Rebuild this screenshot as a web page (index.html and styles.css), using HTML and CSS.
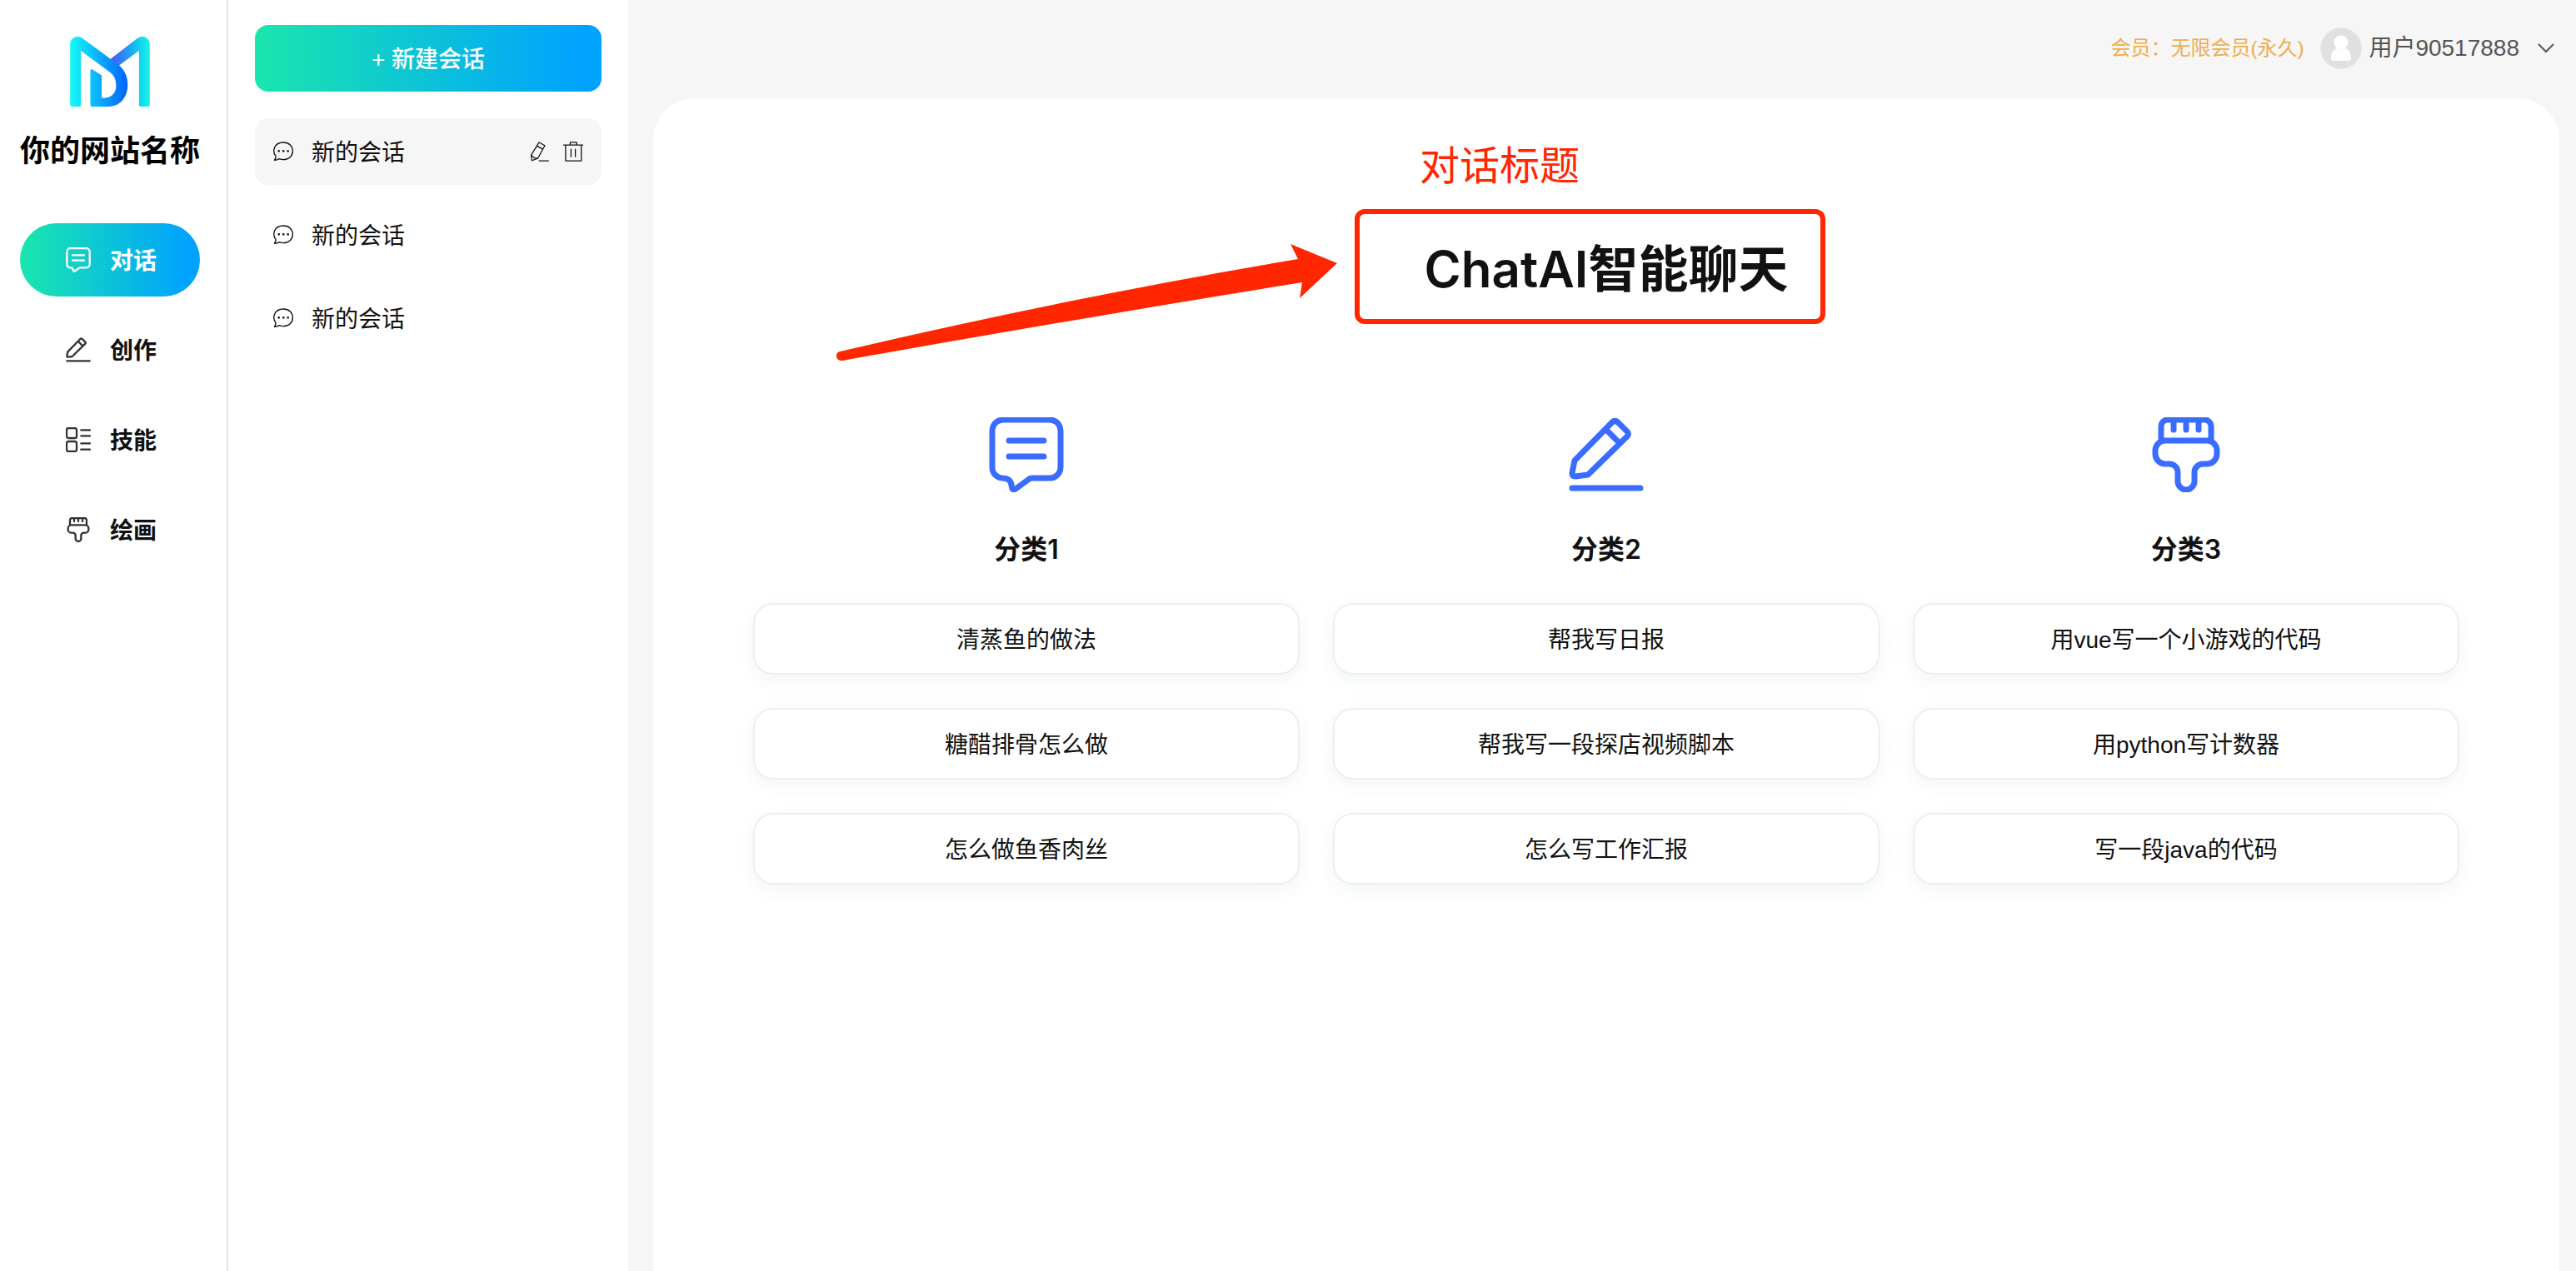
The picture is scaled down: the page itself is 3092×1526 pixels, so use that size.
FILE: index.html
```html
<!DOCTYPE html>
<html lang="zh-CN">
<head>
<meta charset="utf-8">
<meta name="viewport" content="width=device-width, initial-scale=1">
<title>ChatAI智能聊天</title>
<link rel="stylesheet" href="styles.css">
</head>
<body>
<svg class="sprite" aria-hidden="true">
  <symbol id="i-chat" viewBox="0 0 90 90"><path d="M17 3H73a13 13 0 0 1 13 13V60a13 13 0 0 1-13 13H52Q49 73 47 75L32 86Q28 88 27.500 84C27 76 23 73 16 73A12.500 12.500 0 0 1 4 60V16A13 13 0 0 1 17 3ZM24 28H66M24 47H66"/></symbol>
  <symbol id="i-pen" viewBox="0 0 90 90"><path d="M7 52L52 6Q55.500 3 59 6L70 17Q73 20 70 23L23 69L8 71Q4 71 4 67ZM46 16L60 30M4 85H86"/></symbol>
  <symbol id="i-grid" viewBox="0 0 90 90"><rect x="3" y="3" width="36" height="36" rx="7"/><rect x="3" y="51" width="36" height="36" rx="7"/><path d="M55 10H87M55 31H87M55 58H87M55 80H87"/></symbol>
  <symbol id="i-brush" viewBox="0 0 90 90"><path d="M15 28V11A8 8 0 0 1 23 3H67A8 8 0 0 1 75 11V28M30 4V15M45 4V15M60 4V15M20 28H70A12 12 0 0 1 82 40V44A12 12 0 0 1 70 56H65A10 10 0 0 0 55 66V77A10 10 0 0 1 35 77V66A10 10 0 0 0 25 56H20A12 12 0 0 1 8 44V40A12 12 0 0 1 20 28Z"/></symbol>
  <symbol id="i-bubble" viewBox="0 0 72 72"><path d="M9 52C-5 34 3 3 37 3C57 3 70 17 70 34C70 52 56 65 37 65C31 65 26 64 22 62C16 66 10 67 4 67C8 62 10 58 9 52Z"/><path class="dots" d="M20 34H20.100M36.500 34H36.600M53 34H53.100"/></symbol>
  <symbol id="i-edit" viewBox="0 0 72 76"><path d="M33 3L55 15L28 64L6 72L3 51ZM26 17L47 29M3 51L15 62L28 64M33 73H69"/></symbol>
  <symbol id="i-trash" viewBox="0 0 72 74"><path d="M0 13H72M25 13V3H49V13M8 13V71H66V13M28 28V56M44 28V56"/></symbol>
</svg>
<div class="app">
  <aside class="sidebar">
    <svg class="logo" viewBox="252 131 288 253" aria-hidden="true">
      <defs>
        <linearGradient id="g-left" gradientUnits="userSpaceOnUse" x1="252" y1="0" x2="460" y2="0"><stop offset="0" stop-color="#16fbf8"/><stop offset="1" stop-color="#0062ff"/></linearGradient>
        <linearGradient id="g-right" gradientUnits="userSpaceOnUse" x1="397" y1="0" x2="540" y2="0"><stop offset="0" stop-color="#4f51fb"/><stop offset=".5" stop-color="#1fa5f3"/><stop offset=".75" stop-color="#12d4ee"/><stop offset="1" stop-color="#17f4e6"/></linearGradient>
      </defs>
      <path fill="url(#g-right)" d="M397 212L494 138Q512 125 529 136Q540 144 540 160V378Q540 384 534 384H507Q501 384 501 378V182L428 236Z"/>
      <path fill="url(#g-left)" d="M252 378V158C252 142 264 131 279 131Q289 131 298 138L412 222C445 242 460 270 460 305C460 350 433 384 390 384H331Q325 384 325 378V254Q325 247 332 249L366 271V352H378C402 351 418 334 418 310C418 285 411 271 395 259L291 182V378Q291 384 285 384H258Q252 384 252 378Z"/>
    </svg>
    <p class="site-name">你的网站名称</p>
    <nav class="menu">
      <a class="menu-item active" href="#chat" aria-current="page"><svg><use href="#i-chat"/></svg><span class="label">对话</span></a>
      <a class="menu-item" href="#create"><svg><use href="#i-pen"/></svg><span class="label">创作</span></a>
      <a class="menu-item" href="#skills"><svg><use href="#i-grid"/></svg><span class="label">技能</span></a>
      <a class="menu-item" href="#draw"><svg><use href="#i-brush"/></svg><span class="label">绘画</span></a>
    </nav>
  </aside>

  <section class="sessions">
    <button class="new-session" type="button">+ 新建会话</button>
    <ul class="session-list">
      <li class="session active">
        <a href="#session-1"><svg><use href="#i-bubble"/></svg><span class="label">新的会话</span></a>
        <button type="button" aria-label="编辑"><svg><use href="#i-edit"/></svg></button>
        <button type="button" aria-label="删除"><svg><use href="#i-trash"/></svg></button>
      </li>
      <li class="session"><a href="#session-2"><svg><use href="#i-bubble"/></svg><span class="label">新的会话</span></a></li>
      <li class="session"><a href="#session-3"><svg><use href="#i-bubble"/></svg><span class="label">新的会话</span></a></li>
    </ul>
  </section>

  <div class="main">
    <header class="topbar">
      <span class="member">会员：无限会员(永久)</span>
      <button class="user" type="button">
        <svg class="avatar" viewBox="0 0 50 50" aria-hidden="true"><circle cx="25" cy="25" r="25" fill="#e8e8e8"/><circle cx="25" cy="25" r="24" fill="#e0e0e0"/><circle cx="25" cy="18" r="8.500" fill="#fff"/><path d="M13 38C12 31 17 25 21 25Q25 28 29 25C33 25 38 31 37 38Q37 40 32 40H18Q13 40 13 38Z" fill="#fff"/></svg>
        用户90517888
        <svg class="chevron" viewBox="0 0 20 12" aria-hidden="true"><path d="M1 1L10 10L19 1"/></svg>
      </button>
    </header>
    <main class="card">
      <div class="hero">
        <h1>ChatAI智能聊天</h1>
        <span class="note">对话标题</span>
        <span class="note-box"></span>
        <svg class="note-arrow" viewBox="1004 292 602 142" aria-hidden="true"><path d="M1008 422Q1290 356 1558 311L1549 293L1605 316L1560 358L1563 339Q1290 383 1011 433Q1004 433 1004 427Q1004 423 1008 422Z"/></svg>
      </div>
      <div class="categories">
        <section class="category">
          <svg><use href="#i-chat"/></svg>
          <h2>分类1</h2>
          <button type="button">清蒸鱼的做法</button>
          <button type="button">糖醋排骨怎么做</button>
          <button type="button">怎么做鱼香肉丝</button>
        </section>
        <section class="category">
          <svg><use href="#i-pen"/></svg>
          <h2>分类2</h2>
          <button type="button">帮我写日报</button>
          <button type="button">帮我写一段探店视频脚本</button>
          <button type="button">怎么写工作汇报</button>
        </section>
        <section class="category">
          <svg><use href="#i-brush"/></svg>
          <h2>分类3</h2>
          <button type="button">用vue写一个小游戏的代码</button>
          <button type="button">用python写计数器</button>
          <button type="button">写一段java的代码</button>
        </section>
      </div>
    </main>
  </div>
</div>
</body>
</html>
```
FILE: styles.css
```css
* {
  box-sizing: border-box;
}

body {
  margin: 0;
  background: #f6f6f6;
  color: #111;
  font: 28px/40px "Liberation Sans", "Noto Sans CJK SC", sans-serif;
}

h1, h2, p, ul {
  margin: 0;
  padding: 0;
}

a {
  color: inherit;
  text-decoration: none;
}

button {
  padding: 0;
  border: 0;
  background: none;
  color: inherit;
  font: inherit;
  cursor: pointer;
}

svg {
  display: block;
  flex: none;
}

.sprite {
  position: absolute;
  width: 0;
  height: 0;
}

symbol {
  fill: none;
  stroke: currentColor;
  stroke-width: 7;
  stroke-linecap: round;
  stroke-linejoin: round;
  overflow: visible;
}

#i-bubble, #i-edit, #i-trash {
  stroke-width: 4;
}

.dots {
  stroke-width: 8;
}

.label {
  padding-top: 4px;
}

.app {
  display: flex;
  min-height: 100vh;
}

/* Left navigation */
.sidebar {
  flex: none;
  width: 274px;
  padding: 44px 32px 0 24px;
  border-right: 2px solid #dfe4ea;
  background: #fff;
}

.logo {
  width: 96px;
  height: 84px;
  margin: 0 auto;
}

.site-name {
  margin-top: 30px;
  color: #000;
  font-size: 36px;
  font-weight: 700;
  line-height: 48px;
  white-space: nowrap;
}

.menu {
  display: grid;
  gap: 20px;
  margin-top: 62px;
}

.menu-item {
  display: flex;
  align-items: center;
  gap: 23px;
  height: 88px;
  padding-left: 55px;
  border-radius: 44px;
  font-weight: 700;
}

.menu-item svg {
  width: 30px;
  height: 30px;
  color: #333;
}

.menu-item.active,
.new-session {
  background: linear-gradient(90deg, #1ae6ad, #00a2ff 95%);
  color: #fff;
}

.menu-item.active svg {
  color: #fff;
}

/* Session list */
.sessions {
  flex: none;
  width: 480px;
  padding: 30px 32px;
  background: #fff;
}

.new-session {
  width: 100%;
  height: 80px;
  padding-top: 4px;
  border-radius: 16px;
  font-weight: 500;
}

.session-list {
  display: grid;
  gap: 20px;
  margin-top: 32px;
  list-style: none;
}

.session {
  display: flex;
  align-items: center;
  gap: 16px;
  height: 80px;
  padding: 0 22px;
  border-radius: 16px;
}

.session.active {
  background: #f6f6f6;
}

.session a {
  display: flex;
  flex: 1;
  align-items: center;
  gap: 22px;
}

.session svg {
  width: 24px;
  height: 24px;
}

/* Main area */
.main {
  display: flex;
  flex: 1;
  flex-direction: column;
  min-width: 0;
  padding: 0 20px 0 30px;
}

.topbar {
  display: flex;
  align-items: center;
  justify-content: flex-end;
  gap: 20px;
  height: 118px;
  padding: 0 6px 2px;
}

.member {
  color: #f0ad4e;
  font-size: 24px;
}

.user {
  display: flex;
  align-items: center;
  gap: 8px;
  color: #555;
}

.avatar {
  width: 50px;
  height: 50px;
}

.chevron {
  width: 20px;
  height: 12px;
  margin-left: 14px;
  fill: none;
  stroke: #555;
  stroke-width: 2;
}

.card {
  flex: 1;
  padding: 163px 120px 120px;
  border-radius: 50px 50px 0 0;
  background: #fff;
}

.hero {
  position: relative;
  text-align: center;
}

h1 {
  font: 600 60px/84px Inter, "Noto Sans CJK SC", sans-serif;
}

/* Annotation drawn over the title */
.note {
  position: absolute;
  top: -109px;
  left: calc(50% - 224px);
  color: #ff2600;
  font-size: 48px;
  line-height: 56px;
}

.note-box {
  position: absolute;
  top: -30px;
  left: calc(50% - 302px);
  width: 565px;
  height: 138px;
  border: 6px solid #ff2600;
  border-radius: 12px;
}

.note-arrow {
  position: absolute;
  top: 11px;
  left: calc(50% - 924px);
  width: 602px;
  height: 142px;
  fill: #ff2600;
}

.categories {
  display: grid;
  grid-template-columns: repeat(3, 1fr);
  gap: 40px;
  margin-top: 136px;
}

.category {
  display: grid;
  gap: 40px;
}

.category svg {
  width: 90px;
  height: 90px;
  margin: 0 auto;
  color: #3a6cff;
}

h2 {
  margin: 9px 0 4px;
  font: 600 32px/40px Inter, "Noto Sans CJK SC", sans-serif;
  text-align: center;
}

.category button {
  height: 86px;
  padding-top: 4px;
  border: 2px solid #ebf0f0;
  border-radius: 24px;
  background: #fff;
  box-shadow: 0 6px 20px rgba(30, 70, 110, .06);
}
```
